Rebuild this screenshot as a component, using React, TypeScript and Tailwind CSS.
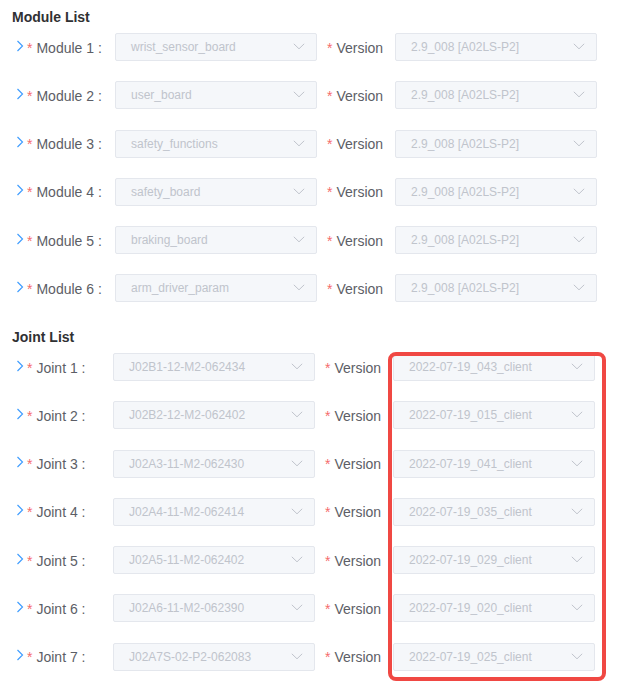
const modules = [
  "wrist_sensor_board",
  "user_board",
  "safety_functions",
  "safety_board",
  "braking_board",
  "arm_driver_param",
];

const joints = [
  ["J02B1-12-M2-062434", "2022-07-19_043_client"],
  ["J02B2-12-M2-062402", "2022-07-19_015_client"],
  ["J02A3-11-M2-062430", "2022-07-19_041_client"],
  ["J02A4-11-M2-062414", "2022-07-19_035_client"],
  ["J02A5-11-M2-062402", "2022-07-19_029_client"],
  ["J02A6-11-M2-062390", "2022-07-19_020_client"],
  ["J02A7S-02-P2-062083", "2022-07-19_025_client"],
];

const Chevron = () => (
  <svg width="8" height="12" viewBox="0 0 8 12" className="ml-[4px] mr-[3px] mt-[-5px] shrink-0">
    <path d="M1.5 1 L6.5 6 L1.5 11" fill="none" stroke="#409eff" strokeWidth="1.2" />
  </svg>
);

const DisabledSelect = ({ value }: { value: string }) => (
  <div className="w-[202px] h-[28px] flex items-center justify-between bg-[#f5f7fa] border border-[#e4e7ed] rounded-[2px] pl-[15px] pr-[11px] text-[12px] text-[#c0c4cc]">
    <span>{value}</span>
    <svg width="12" height="7" viewBox="0 0 12 7" className="shrink-0 mt-[-1px]">
      <path d="M0.8 0.8 L6 5.8 L11.2 0.8" fill="none" stroke="#c0c4cc" strokeWidth="1" />
    </svg>
  </div>
);

const Row = ({
  label,
  value,
  version,
  labelWidth,
}: {
  label: string;
  value: string;
  version: string;
  labelWidth: string;
}) => (
  <div className="flex items-center h-[28px] mb-[20.25px] text-[14px] text-[#5c5e66]">
    <div className={`flex items-center pt-[2px] ${labelWidth}`}>
      <Chevron />
      <span className="text-[#f56c6c] mr-[4px]">*</span>
      <span>{label}</span>
    </div>
    <DisabledSelect value={value} />
    <div className="w-[78px] pl-[10px] pt-[2px] flex items-center">
      <span className="text-[#f56c6c] mr-[4px]">*</span>
      <span>Version</span>
    </div>
    <DisabledSelect value={version} />
  </div>
);

export default function App() {
  return (
    <div
      className="relative bg-white w-[631px] h-[700px] px-3 pt-[7px]"
      style={{ fontFamily: '"Liberation Sans", Arial, sans-serif' }}
    >
      <h3 className="h-[20px] mb-[6px] leading-[20px] text-[14px] font-bold text-[#303133]">
        Module List
      </h3>
      {modules.map((m, i) => (
        <Row
          key={m}
          label={`Module ${i + 1} :`}
          value={m}
          version="2.9_008 [A02LS-P2]"
          labelWidth="w-[103px]"
        />
      ))}
      <h3 className="h-[20px] mt-[24.75px] mb-[6px] leading-[20px] text-[14px] font-bold text-[#303133]">
        Joint List
      </h3>
      {joints.map(([j, v], i) => (
        <Row key={j} label={`Joint ${i + 1} :`} value={j} version={v} labelWidth="w-[101px]" />
      ))}
      <div className="absolute left-[388px] top-[352px] w-[218px] h-[329px] border-4 border-[#f04843] rounded-[8px]" />
    </div>
  );
}
